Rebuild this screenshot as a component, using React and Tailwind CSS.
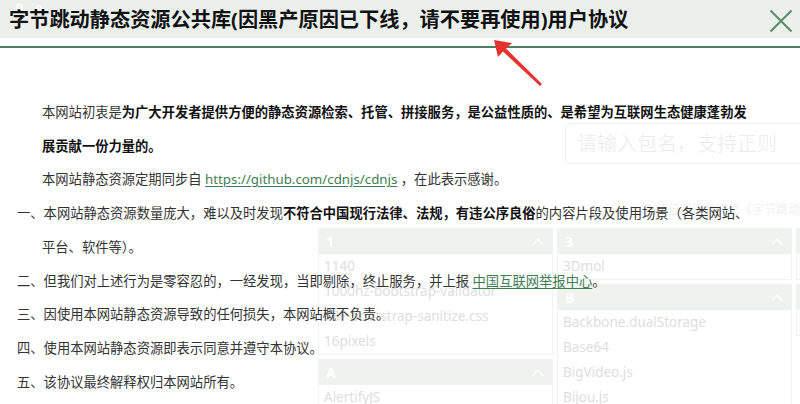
import React from 'react';

const groups = [
  [
    { key: '1', items: ['1140', '1000hz-bootstrap-validator', '18F-bootstrap-sanitize.css', '16pixels'] },
    { key: 'A', items: ['AlertifyJS'] },
  ],
  [
    { key: '3', items: ['3Dmol'] },
    { key: 'B', items: ['Backbone.dualStorage', 'Base64', 'BigVideo.js', 'Bijou.js'] },
  ],
  [
    { key: '5', items: ['50x'] },
    { key: 'C', items: ['c3'] },
  ],
];

function ChevronUp() {
  return (
    <svg width="14" height="14" viewBox="0 0 14 14" fill="none">
      <path d="M2 9.5 L7 4.5 L12 9.5" stroke="#ffffff" strokeWidth="1.6" />
    </svg>
  );
}

function Panel({ group }) {
  return (
    <div className="border border-[#f1f3f2]">
      <div className="flex h-[25px] items-center justify-between bg-[#eef3f0] px-[7px]">
        <span className="text-[14px] font-bold text-white">{group.key}</span>
        <ChevronUp />
      </div>
      {group.items.map((item) => (
        <div key={item} className="h-[25px] px-[5px] text-[13.5px] leading-[25px] whitespace-nowrap text-[#dedede]">
          {item}
        </div>
      ))}
    </div>
  );
}

function BackgroundPage() {
  return (
    <div className="flex flex-col">
      <div className="flex h-[38px] items-start gap-[13px] bg-[#ebf0ed] pl-[16px] pt-[3px]">
        <span className="h-[7px] w-[7px] rounded-full border-2 border-white/80" />
        <span className="mt-[2px] h-[6px] w-[6px] rounded-full border-2 border-white/70" />
      </div>
      <div className="ml-[565px] mt-[85px] flex h-[41px] w-[260px] items-center rounded-[4px] border border-[#efefef] pl-[11px]">
        <span className="text-[20px] font-light whitespace-nowrap text-[#ebebeb]">请输入包名，支持正则</span>
      </div>
      <div className="ml-[645px] mt-[38px] flex h-[16px] items-center gap-[6px] whitespace-nowrap text-[12px] text-[#f0f0f0]">
        <span className="h-[11px] w-[11px] border border-[#ececec]" />
        <span>我已阅读并同意《字节跳动</span>
      </div>
      <div className="ml-[318px] mt-[10px] grid grid-cols-[235px_235px_235px] gap-x-[4px]">
        {groups.map((col, i) => (
          <div key={i} className="flex flex-col gap-[4px]">
            {col.map((g) => (
              <Panel key={g.key} group={g} />
            ))}
          </div>
        ))}
      </div>
    </div>
  );
}

function Link({ children }) {
  return <span className="text-[#3f7d52] underline underline-offset-2">{children}</span>;
}

function Agreement() {
  return (
    <div className="absolute inset-0 flex flex-col">
      <div className="flex h-[38px] items-center justify-between pl-[9px] pr-[7px]">
        <h1 className="text-[20.2px] font-bold whitespace-nowrap text-[#111111]">
          字节跳动静态资源公共库(因黑产原因已下线，请不要再使用)用户协议
        </h1>
        <svg width="24" height="24" viewBox="0 0 24 24" fill="none" className="mt-[4px]">
          <path d="M1.5 1.5 L22.5 22.5 M22.5 1.5 L1.5 22.5" stroke="#5a8b68" strokeWidth="2" />
        </svg>
      </div>
      <div className="mt-[8px] h-[2px] bg-[#4f7d60]" />
      <div className="pt-[48px] text-[13.3px] leading-[33.7px] whitespace-nowrap text-[#333333]">
        <div className="pl-[42px]">
          本网站初衷是<b className="font-bold text-[#111111]">为广大开发者提供方便的静态资源检索、托管、拼接服务，是公益性质的、是希望为互联网生态健康蓬勃发</b>
        </div>
        <div className="pl-[42px] font-bold text-[#111111]">展贡献一份力量的。</div>
        <div className="pl-[42px]">
          本网站静态资源定期同步自 <Link>https://github.com/cdnjs/cdnjs</Link> ，在此表示感谢。
        </div>
        <div className="pl-[17px]">
          一、本网站静态资源数量庞大，难以及时发现<b className="font-bold text-[#111111]">不符合中国现行法律、法规，有违公序良俗</b>的内容片段及使用场景（各类网站、
        </div>
        <div className="pl-[42px]">平台、软件等）。</div>
        <div className="pl-[17px]">
          二、但我们对上述行为是零容忍的，一经发现，当即剔除，终止服务，并上报 <Link>中国互联网举报中心</Link>。
        </div>
        <div className="pl-[17px]">三、因使用本网站静态资源导致的任何损失，本网站概不负责。</div>
        <div className="pl-[17px]">四、使用本网站静态资源即表示同意并遵守本协议。</div>
        <div className="pl-[17px]">五、该协议最终解释权归本网站所有。</div>
      </div>
      <svg className="absolute left-[490px] top-[36px]" width="56" height="54" viewBox="0 0 56 54">
        <polygon points="4,4 8,21 13,15.5 50,50 52,48 16,12.5 22,7" fill="#e8322f" />
      </svg>
    </div>
  );
}

export default function App() {
  return (
    <div
      className="relative h-[404px] w-[800px] overflow-hidden bg-white"
      style={{ fontFamily: '"Noto Sans", "Noto Sans CJK SC", sans-serif' }}
    >
      <BackgroundPage />
      <Agreement />
    </div>
  );
}
